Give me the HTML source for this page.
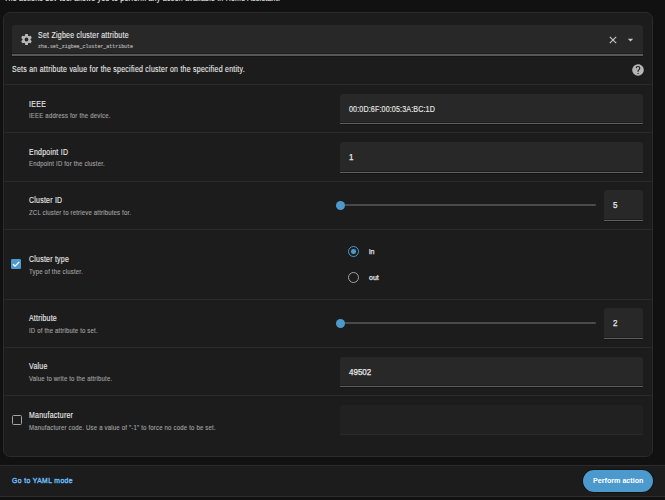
<!DOCTYPE html>
<html><head><meta charset="utf-8"><style>
html,body{margin:0;padding:0;}
body{width:665px;height:500px;overflow:hidden;background:#111111;position:relative;font-family:"Liberation Sans",sans-serif;}
.t{position:absolute;white-space:pre;line-height:1;transform-origin:0 0;}
.r{position:absolute;}
</style></head><body>
<div class="t" style="left:4px;top:-6.15px;font-size:8.300px;color:#e8e8e8;font-weight:400;font-family:'Liberation Sans',sans-serif;transform:scaleX(0.8400);letter-spacing:0.331px;-webkit-text-stroke:0.12px #e8e8e8;">The actions dev tool allows you to perform any action available in Home Assistant.</div>
<div class="r" style="left:3px;top:12px;width:650px;height:445px;background:#1c1c1c;border:1px solid #2b2b2b;border-radius:7px;box-sizing:border-box"></div>
<div class="r" style="left:12px;top:25px;width:631px;height:31px;background:#282828;border-radius:3px 3px 0 0;border-bottom:2px solid #575757;box-sizing:border-box;box-shadow:inset 0 -1px 0 #1e1e1e, 0 1px 0 #131313"></div>
<svg class="r" style="left:20px;top:33px" width="13" height="13" viewBox="0 0 24 24"><path fill="#b8b8b8" d="M12,15.5A3.5,3.5 0 0,1 8.5,12A3.5,3.5 0 0,1 12,8.5A3.5,3.5 0 0,1 15.5,12A3.5,3.5 0 0,1 12,15.5M19.43,12.97C19.47,12.65 19.5,12.33 19.5,12C19.5,11.67 19.47,11.34 19.43,11L21.54,9.37C21.730,9.22 21.78,8.95 21.66,8.73L19.66,5.27C19.54,5.05 19.27,4.96 19.05,5.05L16.56,6.05C16.04,5.66 15.5,5.32 14.87,5.07L14.5,2.42C14.46,2.18 14.25,2 14,2H10C9.75,2 9.54,2.18 9.5,2.42L9.13,5.07C8.5,5.32 7.96,5.66 7.44,6.05L4.95,5.05C4.73,4.96 4.46,5.05 4.34,5.27L2.34,8.73C2.21,8.95 2.27,9.22 2.46,9.37L4.57,11C4.53,11.34 4.5,11.67 4.5,12C4.5,12.33 4.53,12.65 4.57,12.97L2.46,14.63C2.27,14.78 2.21,15.05 2.34,15.27L4.34,18.73C4.46,18.95 4.73,19.03 4.95,18.95L7.44,17.94C7.96,18.34 8.5,18.68 9.13,18.93L9.5,21.58C9.54,21.82 9.75,22 10,22H14C14.25,22 14.46,21.82 14.5,21.58L14.87,18.93C15.5,18.67 16.04,18.34 16.56,17.94L19.05,18.950C19.27,19.03 19.54,18.95 19.66,18.73L21.66,15.27C21.78,15.05 21.73,14.78 21.54,14.63L19.43,12.97Z"/></svg>
<div class="t" style="left:38px;top:31.35px;font-size:8.300px;color:#e8e8e8;font-weight:400;font-family:'Liberation Sans',sans-serif;transform:scaleX(0.8400);letter-spacing:0.319px;-webkit-text-stroke:0.12px #e8e8e8;">Set Zigbee cluster attribute</div>
<div class="t" style="left:38px;top:43.86px;font-size:5.690px;color:#ababab;font-weight:400;font-family:'Liberation Mono',monospace;transform:scaleX(0.8700);-webkit-text-stroke:0.2px #ababab;">zha.set_zigbee_cluster_attribute</div>
<svg class="r" style="left:609px;top:36px" width="8" height="8" viewBox="0 0 8 8"><path d="M0.8,0.8L7.2,7.2M7.2,0.8L0.8,7.2" stroke="#c8c8c8" stroke-width="1.1"/></svg>
<svg class="r" style="left:627px;top:38px" width="7" height="5" viewBox="0 0 7 5"><path d="M0.8,0.8L6.2,0.8L3.5,3.6Z" fill="#c8c8c8"/></svg>
<div class="t" style="left:12px;top:64.85px;font-size:8.300px;color:#e8e8e8;font-weight:400;font-family:'Liberation Sans',sans-serif;transform:scaleX(0.8400);letter-spacing:0.310px;-webkit-text-stroke:0.12px #e8e8e8;">Sets an attribute value for the specified cluster on the specified entity.</div>
<svg class="r" style="left:631px;top:63px" width="14" height="14" viewBox="0 0 24 24"><path fill="#b5b5b5" d="M15.07,11.25L14.17,12.17C13.45,12.89 13,13.5 13,15H11V14.5C11,13.39 11.45,12.39 12.17,11.67L13.41,10.41C13.78,10.05 14,9.55 14,9C14,7.89 13.1,7 12,7A2,2 0 0,0 10,9H8A4,4 0 0,1 12,5A4,4 0 0,1 16,9C16,9.88 15.640,10.67 15.07,11.25M13,19H11V17H13M12,2A10,10 0 0,0 2,12A10,10 0 0,0 12,22A10,10 0 0,0 22,12C22,6.47 17.5,2 12,2Z"/></svg>
<div class="r" style="left:4px;top:84px;width:648px;height:1px;background:#2a2a2a"></div>
<div class="r" style="left:4px;top:132px;width:648px;height:1px;background:#2a2a2a"></div>
<div class="r" style="left:4px;top:181px;width:648px;height:1px;background:#2a2a2a"></div>
<div class="r" style="left:4px;top:229px;width:648px;height:1px;background:#2a2a2a"></div>
<div class="r" style="left:4px;top:299px;width:648px;height:1px;background:#2a2a2a"></div>
<div class="r" style="left:4px;top:347px;width:648px;height:1px;background:#2a2a2a"></div>
<div class="r" style="left:4px;top:395px;width:648px;height:1px;background:#2a2a2a"></div>
<div class="t" style="left:29px;top:99.75px;font-size:8.300px;color:#e8e8e8;font-weight:400;font-family:'Liberation Sans',sans-serif;transform:scaleX(0.8400);letter-spacing:0.358px;-webkit-text-stroke:0.14px #e8e8e8;">IEEE</div>
<div class="t" style="left:29px;top:111.90px;font-size:7.200px;color:#a3a3a3;font-weight:400;font-family:'Liberation Sans',sans-serif;transform:scaleX(0.8400);letter-spacing:0.217px;-webkit-text-stroke:0.12px #a3a3a3;">IEEE address for the device.</div>
<div class="r" style="left:340px;top:94px;width:303px;height:30px;background:#282828;border-radius:3px 3px 0 0;border-bottom:1.3px solid #5e5e5e;box-sizing:border-box;box-shadow:inset 0 -1px 0 #1e1e1e, 0 1px 0 #151515"></div>
<div class="t" style="left:349px;top:104.75px;font-size:8.500px;color:#e8e8e8;font-weight:400;font-family:'Liberation Sans',sans-serif;transform:scaleX(0.8400);letter-spacing:0.156px;-webkit-text-stroke:0.14px #e8e8e8;">00:0D:6F:00:05:3A:BC:1D</div>
<div class="t" style="left:29px;top:147.75px;font-size:8.300px;color:#e8e8e8;font-weight:400;font-family:'Liberation Sans',sans-serif;transform:scaleX(0.8400);letter-spacing:0.299px;-webkit-text-stroke:0.14px #e8e8e8;">Endpoint ID</div>
<div class="t" style="left:29px;top:159.90px;font-size:7.200px;color:#a3a3a3;font-weight:400;font-family:'Liberation Sans',sans-serif;transform:scaleX(0.8400);letter-spacing:0.201px;-webkit-text-stroke:0.12px #a3a3a3;">Endpoint ID for the cluster.</div>
<div class="r" style="left:340px;top:142px;width:303px;height:31px;background:#282828;border-radius:3px 3px 0 0;border-bottom:1.3px solid #5e5e5e;box-sizing:border-box;box-shadow:inset 0 -1px 0 #1e1e1e, 0 1px 0 #151515"></div>
<div class="t" style="left:349px;top:153.29px;font-size:8.421px;color:#e8e8e8;font-weight:400;font-family:'Liberation Sans',sans-serif;transform:scaleX(0.9500);-webkit-text-stroke:0.25px #e8e8e8;">1</div>
<div class="t" style="left:29px;top:196.25px;font-size:8.300px;color:#e8e8e8;font-weight:400;font-family:'Liberation Sans',sans-serif;transform:scaleX(0.8400);letter-spacing:0.279px;-webkit-text-stroke:0.14px #e8e8e8;">Cluster ID</div>
<div class="t" style="left:29px;top:208.90px;font-size:7.200px;color:#a3a3a3;font-weight:400;font-family:'Liberation Sans',sans-serif;transform:scaleX(0.8400);letter-spacing:0.195px;-webkit-text-stroke:0.12px #a3a3a3;">ZCL cluster to retrieve attributes for.</div>
<div class="r" style="left:341px;top:204.2px;width:255px;height:2px;background:#4a4a4a;border-radius:1px"></div>
<div class="r" style="left:336px;top:201.0px;width:9.3px;height:9.3px;background:#4c9acd;border-radius:50%"></div>
<div class="r" style="left:604px;top:190px;width:39px;height:31px;background:#282828;border-radius:3px 3px 0 0;border-bottom:1.3px solid #5e5e5e;box-sizing:border-box;box-shadow:inset 0 -1px 0 #1e1e1e, 0 1px 0 #151515"></div>
<div class="t" style="left:613px;top:200.79px;font-size:8.421px;color:#e8e8e8;font-weight:400;font-family:'Liberation Sans',sans-serif;transform:scaleX(0.9500);-webkit-text-stroke:0.25px #e8e8e8;">5</div>
<svg class="r" style="left:11px;top:259px" width="10" height="10" viewBox="0 0 10 10"><rect x="0" y="0" width="10" height="10" rx="1.2" fill="#4c9acd"/><path d="M2,5.2L4,7.2L8.2,3" stroke="#fff" stroke-width="1.3" fill="none"/></svg>
<div class="t" style="left:29px;top:255.25px;font-size:8.300px;color:#e8e8e8;font-weight:400;font-family:'Liberation Sans',sans-serif;transform:scaleX(0.8400);letter-spacing:0.279px;-webkit-text-stroke:0.14px #e8e8e8;">Cluster type</div>
<div class="t" style="left:29px;top:267.90px;font-size:7.200px;color:#a3a3a3;font-weight:400;font-family:'Liberation Sans',sans-serif;transform:scaleX(0.8400);letter-spacing:0.201px;-webkit-text-stroke:0.12px #a3a3a3;">Type of the cluster.</div>
<div class="r" style="left:348px;top:245.7px;width:11px;height:11px;border:1.7px solid #4c9acd;border-radius:50%;box-sizing:border-box"></div>
<div class="r" style="left:351.3px;top:249px;width:4.5px;height:4.5px;background:#4c9acd;border-radius:50%"></div>
<div class="t" style="left:368.8px;top:248.20px;font-size:7.609px;color:#e8e8e8;font-weight:400;font-family:'Liberation Sans',sans-serif;transform:scaleX(0.9200);-webkit-text-stroke:0.25px #e8e8e8;">in</div>
<div class="r" style="left:348px;top:271.5px;width:11px;height:11px;border:1.7px solid #a3a3a3;border-radius:50%;box-sizing:border-box"></div>
<div class="t" style="left:368.8px;top:274.20px;font-size:7.609px;color:#e8e8e8;font-weight:400;font-family:'Liberation Sans',sans-serif;transform:scaleX(0.9200);-webkit-text-stroke:0.25px #e8e8e8;">out</div>
<div class="t" style="left:29px;top:314.25px;font-size:8.300px;color:#e8e8e8;font-weight:400;font-family:'Liberation Sans',sans-serif;transform:scaleX(0.8400);letter-spacing:0.260px;-webkit-text-stroke:0.14px #e8e8e8;">Attribute</div>
<div class="t" style="left:29px;top:326.90px;font-size:7.200px;color:#a3a3a3;font-weight:400;font-family:'Liberation Sans',sans-serif;transform:scaleX(0.8400);letter-spacing:0.189px;-webkit-text-stroke:0.12px #a3a3a3;">ID of the attribute to set.</div>
<div class="r" style="left:341px;top:322.4px;width:255px;height:2px;background:#4a4a4a;border-radius:1px"></div>
<div class="r" style="left:336px;top:319.2px;width:9.3px;height:9.3px;background:#4c9acd;border-radius:50%"></div>
<div class="r" style="left:604px;top:308px;width:39px;height:31px;background:#282828;border-radius:3px 3px 0 0;border-bottom:1.3px solid #5e5e5e;box-sizing:border-box;box-shadow:inset 0 -1px 0 #1e1e1e, 0 1px 0 #151515"></div>
<div class="t" style="left:613px;top:319.19px;font-size:8.421px;color:#e8e8e8;font-weight:400;font-family:'Liberation Sans',sans-serif;transform:scaleX(0.9500);-webkit-text-stroke:0.25px #e8e8e8;">2</div>
<div class="t" style="left:29px;top:362.25px;font-size:8.300px;color:#e8e8e8;font-weight:400;font-family:'Liberation Sans',sans-serif;transform:scaleX(0.8400);letter-spacing:0.312px;-webkit-text-stroke:0.14px #e8e8e8;">Value</div>
<div class="t" style="left:29px;top:375.40px;font-size:7.200px;color:#a3a3a3;font-weight:400;font-family:'Liberation Sans',sans-serif;transform:scaleX(0.8400);letter-spacing:0.193px;-webkit-text-stroke:0.12px #a3a3a3;">Value to write to the attribute.</div>
<div class="r" style="left:340px;top:357px;width:303px;height:30px;background:#282828;border-radius:3px 3px 0 0;border-bottom:1.3px solid #5e5e5e;box-sizing:border-box;box-shadow:inset 0 -1px 0 #1e1e1e, 0 1px 0 #151515"></div>
<div class="t" style="left:349px;top:368.29px;font-size:8.421px;color:#e8e8e8;font-weight:400;font-family:'Liberation Sans',sans-serif;transform:scaleX(0.9500);-webkit-text-stroke:0.25px #e8e8e8;">49502</div>
<div class="r" style="left:11.5px;top:414.5px;width:10px;height:10px;border:1.7px solid #a3a3a3;border-radius:1.5px;box-sizing:border-box"></div>
<div class="t" style="left:29px;top:411.05px;font-size:8.300px;color:#e8e8e8;font-weight:400;font-family:'Liberation Sans',sans-serif;transform:scaleX(0.8400);letter-spacing:0.309px;-webkit-text-stroke:0.14px #e8e8e8;">Manufacturer</div>
<div class="t" style="left:29px;top:423.50px;font-size:7.200px;color:#a3a3a3;font-weight:400;font-family:'Liberation Sans',sans-serif;transform:scaleX(0.8400);letter-spacing:0.210px;-webkit-text-stroke:0.12px #a3a3a3;">Manufacturer code. Use a value of "-1" to force no code to be set.</div>
<div class="r" style="left:340px;top:405px;width:303px;height:30px;background:#212121;border-radius:3px 3px 0 0;border-bottom:1px solid #2a2a2a;box-sizing:border-box"></div>
<div class="r" style="left:0px;top:465px;width:665px;height:32px;background:#1c1c1c;border-top:1px solid #2b2b2b;border-bottom:1px solid #2b2b2b;box-sizing:border-box"></div>
<div class="t" style="left:12px;top:476.75px;font-size:8.100px;color:#6ab8f2;font-weight:400;font-family:'Liberation Sans',sans-serif;transform:scaleX(0.8400);letter-spacing:0.467px;-webkit-text-stroke:0.45px #6ab8f2;">Go to YAML mode</div>
<div class="r" style="left:583px;top:470px;width:70px;height:22px;background:#4c9acd;border-radius:11px;box-shadow:0 0 0.5px 0.8px #101010"></div>
<div class="t" style="left:592.8px;top:477.11px;font-size:7.783px;color:#ffffff;font-weight:700;font-family:'Liberation Sans',sans-serif;transform:scaleX(0.9200);">Perform action</div>
</body></html>
